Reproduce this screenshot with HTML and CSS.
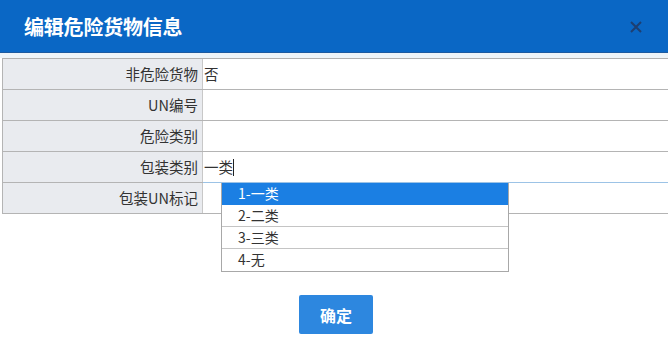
FILE: index.html
```html
<!DOCTYPE html>
<html lang="zh">
<head>
<meta charset="utf-8">
<title>编辑危险货物信息</title>
<link rel="stylesheet" href="styles.css">
</head>
<body>
<div class="dialog">
  <div class="header">
    <span class="title">编辑危险货物信息</span>
    <svg class="close" width="14" height="14" viewBox="0 0 14 14"><path d="M2 2L12 12M12 2L2 12" stroke="#1d3f72" stroke-width="2" fill="none"/></svg>
  </div>
  <div class="band"></div>
  <div class="form">
    <div class="row"><div class="label">非危险货物</div><div class="value">否</div></div>
    <div class="row"><div class="label">UN编号</div><div class="value"></div></div>
    <div class="row"><div class="label">危险类别</div><div class="value"></div></div>
    <div class="row"><div class="label">包装类别</div><div class="value focus">一类<span class="caret"></span></div></div>
    <div class="row"><div class="label">包装UN标记</div><div class="value"></div></div>
  </div>
  <ul class="dropdown">
    <li class="active">1-一类</li>
    <li>2-二类</li>
    <li>3-三类</li>
    <li>4-无</li>
  </ul>
  <div class="actions"><button class="ok">确定</button></div>
</div>
</body>
</html>
```
FILE: styles.css
```css
html, body {
  margin: 0;
  padding: 0;
  background: #fff;
  font-family: "Noto Sans CJK SC", "Noto Sans", sans-serif;
  color: #333;
}
.dialog {
  position: relative;
  width: 668px;
  height: 350px;
  overflow: hidden;
}
.header {
  height: 52px;
  background: #0a67c5;
  border-bottom: 1px solid #1c5aa0;
  display: flex;
  align-items: center;
  justify-content: space-between;
  padding: 0 25px 0 24px;
}
.title {
  color: #fff;
  font-size: 20px;
  font-weight: bold;
  letter-spacing: -0.2px;
}
.close {
  margin-top: 2px;
}
.band {
  height: 5px;
  background: #eef4f8;
}
.form {
  margin-left: 2px;
  border-left: 1px solid #b4b4b4;
  border-top: 1px solid #b0b0b0;
}
.row {
  display: flex;
  height: 30px;
  border-bottom: 1px solid #b4b4b4;
}
.label {
  width: 195px;
  flex: none;
  background: #e9ebef;
  text-align: right;
  padding-right: 4px;
  font-size: 14.5px;
  line-height: 30px;
  border-right: 1px solid #c8c8c8;
}
.value {
  flex: 1;
  font-size: 14.5px;
  line-height: 30px;
  padding-left: 1px;
  position: relative;
}
.value.focus {
  border-bottom: 1px solid #9cc3e6;
  margin-bottom: -1px;
  z-index: 1;
}
.caret {
  display: inline-block;
  width: 1px;
  height: 17px;
  background: #222;
  vertical-align: -3px;
}
.dropdown {
  position: absolute;
  left: 221px;
  top: 183px;
  width: 286px;
  margin: 0;
  padding: 0;
  list-style: none;
  background: #fff;
  border: 1px solid #a8a8a8;
  border-top: none;
  z-index: 2;
}
.dropdown li {
  height: 21px;
  line-height: 21px;
  font-size: 14px;
  padding-left: 16px;
  border-bottom: 1px solid #c4c4c4;
  color: #333;
}
.dropdown li:last-child {
  border-bottom: none;
  height: 22px;
}
.dropdown li.active {
  background: #1b7fe3;
  color: #fff;
  height: 22px;
  border-bottom: none;
}
.actions {
  display: flex;
  justify-content: center;
  padding-top: 81px;
  padding-left: 4px;
}
.ok {
  width: 74px;
  height: 39px;
  border: none;
  border-radius: 2px;
  background: #2d87df;
  color: #fff;
  font-family: "Noto Sans CJK SC", sans-serif;
  font-size: 16px;
  font-weight: bold;
}
```
